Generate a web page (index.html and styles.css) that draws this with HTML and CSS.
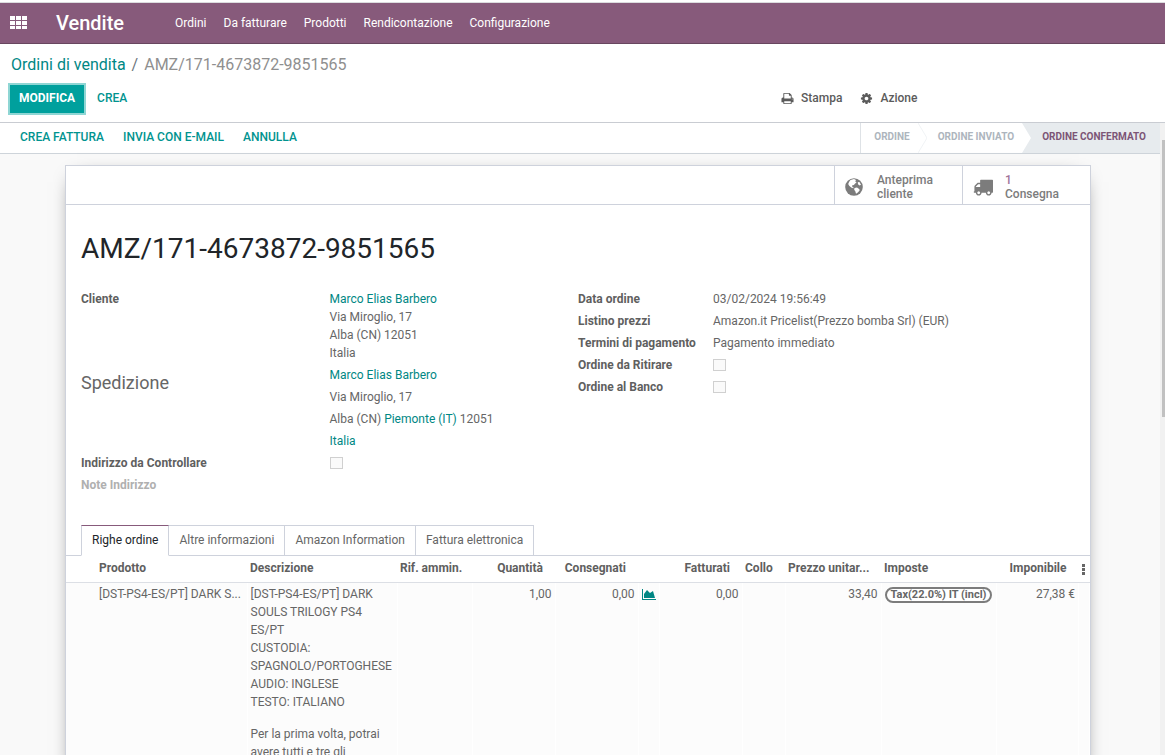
FILE: index.html
```html
<!DOCTYPE html>
<html lang="it">
<head>
<meta charset="utf-8">
<title>AMZ/171-4673872-9851565 - Vendite</title>
<link rel="stylesheet" href="styles.css">
</head>
<body>
<header class="navbar">
  <button class="apps" type="button" aria-label="Applicazioni">
    <svg width="17" height="14" viewBox="0 0 17 14" fill="currentColor"><path d="M0 0h5v4H0zM6 0h5v4H6zM12 0h5v4h-5zM0 5h5v4H0zM6 5h5v4H6zM12 5h5v4h-5zM0 10h5v3H0zM6 10h5v3H6zM12 10h5v3h-5z"/></svg>
  </button>
  <a class="brand" href="#">Vendite</a>
  <nav class="menu">
    <a href="#">Ordini</a>
    <a href="#">Da fatturare</a>
    <a href="#">Prodotti</a>
    <a href="#">Rendicontazione</a>
    <a href="#">Configurazione</a>
  </nav>
</header>

<section class="control-panel">
  <nav class="breadcrumb">
    <a href="#">Ordini di vendita</a><span class="slash">/</span><span class="current">AMZ/171-4673872-9851565</span>
  </nav>
  <div class="cp-bottom">
    <div class="cp-buttons">
      <button class="btn-primary" type="button">MODIFICA</button>
      <button class="btn-link" type="button">CREA</button>
    </div>
    <div class="cp-actions">
      <button class="btn-action" type="button">
        <svg width="13" height="13" viewBox="0 0 1792 1792" fill="currentColor"><path d="M448 1536h896v-256h-896v256zm0-640h896v-384h-160q-40 0-68-28t-28-68v-160h-640v640zm1152 64q0-26-19-45t-45-19-45 19-19 45 19 45 45 19 45-19 19-45zm128 0v416q0 13-9.5 22.5t-22.5 9.5h-224v160q0 40-28 68t-68 28h-960q-40 0-68-28t-28-68v-160h-224q-13 0-22.5-9.5t-9.5-22.5v-416q0-79 56.5-135.5t135.5-56.5h64v-544q0-40 28-68t68-28h672q40 0 88 20t76 48l152 152q28 28 48 76t20 88v256h64q79 0 135.5 56.5t56.5 135.5z"/></svg>
        Stampa
      </button>
      <button class="btn-action" type="button">
        <svg width="13" height="13" viewBox="0 0 1792 1792" fill="currentColor"><path d="M1152 896q0-106-75-181t-181-75-181 75-75 181 75 181 181 75 181-75 75-181zm512-109v222q0 12-8 23t-20 13l-185 28q-19 54-39 91 35 50 107 138 10 12 10 25t-9 23q-27 37-99 108t-94 71q-12 0-26-9l-138-108q-44 23-91 38-16 136-29 186-7 28-36 28h-222q-14 0-24.5-8.5t-11.5-21.5l-28-184q-49-16-90-37l-141 107q-10 9-25 9-14 0-25-11-126-114-165-168-7-10-7-23 0-12 8-23 15-21 51-66.5t54-70.5q-27-50-41-99l-183-27q-13-2-21-12.5t-8-23.5v-222q0-12 8-23t19-13l186-28q14-46 39-92-40-57-107-138-10-12-10-24 0-10 9-23 26-36 98.5-107.5t94.5-71.5q13 0 26 10l138 107q44-23 91-38 16-136 29-186 7-28 36-28h222q14 0 24.5 8.5t11.5 21.5l28 184q49 16 90 37l142-107q9-9 24-9 13 0 25 10 129 119 165 170 7 8 7 22 0 12-8 23-15 21-51 66.5t-54 70.5q26 50 41 98l183 28q13 2 21 12.5t8 23.5z"/></svg>
        Azione
      </button>
    </div>
  </div>
</section>

<div class="scroller">
  <main class="content">
    <div class="statusbar">
      <div class="status-buttons">
        <button class="btn-link" type="button">CREA FATTURA</button>
        <button class="btn-link" type="button">INVIA CON E-MAIL</button>
        <button class="btn-link" type="button">ANNULLA</button>
      </div>
      <div class="steps">
        <span class="step step-first">ORDINE</span>
        <svg class="chevron" width="9" height="30" viewBox="0 0 9 30"><path d="M0 0l9 15-9 15" fill="none" stroke="#f1f3f5"/></svg>
        <span class="step">ORDINE INVIATO</span>
        <svg class="chevron" width="9" height="30" viewBox="0 0 9 30"><path d="M0 0h9v30H0l9-15z" fill="#e7ebee"/></svg>
        <span class="step step-active">ORDINE CONFERMATO</span>
      </div>
    </div>

    <article class="sheet">
      <div class="button-box">
        <button class="stat" type="button">
          <svg width="18" height="18" viewBox="0 0 18 18"><circle cx="9" cy="9" r="8.800" fill="#7c7c7c"/><path d="M5.500 2l3.500-.9 2 .9-.8 1.400 1.400.8-1.400 1.200-1.400 1.600-1.800.6.400 1.400 1.400.8-.6.400-2-.8-2-1.600-1-1.800 1-2.200zM9.500 10l2.500-.6 2.400 1.800.2 1.400-1.800 2-1.800 1.200-.6-2.400-1.200-1.600zM12.800 4.200l1.600-.2 1.600 2.800-1.400.6-1.600-1.200z" fill="#fff"/></svg>
          <span>Anteprima cliente</span>
        </button>
        <button class="stat" type="button">
          <svg width="20" height="20" viewBox="0 0 1792 1792" fill="#7c7c7c"><path d="M640 1408q0-52-38-90t-90-38-90 38-38 90 38 90 90 38 90-38 38-90zm-384-512h384v-256h-158q-13 0-22 9l-195 195q-9 9-9 22v30zm1280 512q0-52-38-90t-90-38-90 38-38 90 38 90 90 38 90-38 38-90zm256-1088v1024q0 15-4 26.500t-13.500 18.500-16.500 11.500-23.500 6-22.500 2-25.500 0-22.500-.5q0 106-75 181t-181 75-181-75-75-181h-384q0 106-75 181t-181 75-181-75-75-181h-64q-3 0-22.500.5t-25.500 0-22.500-2-23.500-6-16.500-11.500-13.500-18.500-4-26.500q0-26 19-45t45-19v-320q0-8-.5-35t0-38 2.500-34.500 6.500-37 14-30.500 22.500-30l198-198q19-19 50.500-32t58.500-13h160v-192q0-26 19-45t45-19h1024q26 0 45 19t19 45z"/></svg>
          <span><b class="stat-value">1</b>Consegna</span>
        </button>
      </div>

      <div class="sheet-body">
        <h1 class="title">AMZ/171-4673872-9851565</h1>
        <div class="groups">
          <div class="group group-left">
            <span class="label">Cliente</span>
            <div class="value"><a href="#">Marco Elias Barbero</a><br>Via Miroglio, 17<br>Alba (CN) 12051<br>Italia</div>
            <span class="label-large">Spedizione</span>
            <div class="value-spaced"><a href="#">Marco Elias Barbero</a><br>Via Miroglio, 17<br>Alba (CN) <a href="#">Piemonte (IT)</a> 12051<br><a href="#">Italia</a></div>
            <label class="label" for="addr-check">Indirizzo da Controllare</label>
            <div class="value value-check"><input class="check" id="addr-check" type="checkbox" disabled></div>
            <span class="label label-empty">Note Indirizzo</span>
            <div class="value"></div>
          </div>
          <div class="group group-right">
            <span class="label">Data ordine</span>
            <div class="value">03/02/2024 19:56:49</div>
            <span class="label">Listino prezzi</span>
            <div class="value">Amazon.it Pricelist(Prezzo bomba Srl) (EUR)</div>
            <span class="label">Termini di pagamento</span>
            <div class="value">Pagamento immediato</div>
            <label class="label" for="pickup">Ordine da Ritirare</label>
            <div class="value value-check"><input class="check" id="pickup" type="checkbox" disabled></div>
            <label class="label" for="counter">Ordine al Banco</label>
            <div class="value value-check"><input class="check" id="counter" type="checkbox" disabled></div>
          </div>
        </div>
      </div>

      <nav class="tabs">
        <a class="tab tab-active" href="#">Righe ordine</a>
        <a class="tab" href="#">Altre informazioni</a>
        <a class="tab" href="#">Amazon Information</a>
        <a class="tab" href="#">Fattura elettronica</a>
      </nav>

      <table class="lines">
        <colgroup>
          <col class="c-product"><col class="c-desc"><col class="c-ref"><col class="c-qty"><col class="c-qty"><col class="c-chart"><col class="c-qty"><col class="c-pack"><col class="c-price"><col><col class="c-total"><col class="c-more">
        </colgroup>
        <thead>
          <tr>
            <th>Prodotto</th><th>Descrizione</th><th>Rif. ammin.</th><th class="num">Quantità</th><th class="num">Consegnati</th><th></th><th class="num">Fatturati</th><th>Collo</th><th>Prezzo unitar...</th><th>Imposte</th><th class="num">Imponibile</th>
            <th class="more"><svg width="3" height="11" viewBox="0 0 3 11" fill="#666"><path d="M0 0h3v3H0zM0 4h3v3H0zM0 8h3v3H0z"/></svg></th>
          </tr>
        </thead>
        <tbody>
          <tr>
            <td class="product">[DST-PS4-ES/PT] DARK S...</td>
            <td class="desc"><p>[DST-PS4-ES/PT] DARK SOULS TRILOGY PS4 ES/PT<br>CUSTODIA: SPAGNOLO/PORTOGHESE<br>AUDIO: INGLESE<br>TESTO: ITALIANO</p><p>Per la prima volta, potrai avere tutti e tre gli</p></td>
            <td></td>
            <td class="num">1,00</td>
            <td class="num">0,00</td>
            <td class="chart"><svg width="14" height="11" viewBox="0 0 14 11" fill="#008784"><path d="M0 0h1v10h13v1H0z"/><path d="M2 9V5l3-4 3 3 3-2 2 7z"/></svg></td>
            <td class="num">0,00</td>
            <td></td>
            <td class="num">33,40</td>
            <td><span class="tag">Tax(22.0%) IT (incl)</span></td>
            <td class="num">27,38 €</td>
            <td></td>
          </tr>
        </tbody>
      </table>
    </article>
  </main>
  <div class="track"><div class="thumb"></div></div>
</div>
</body>
</html>
```

FILE: styles.css
```css
* { box-sizing: border-box; }
body {
  margin: 0;
  height: 100vh;
  display: flex;
  flex-direction: column;
  overflow: hidden;
  background: #fff;
  color: #666;
  font: 12px/18px Roboto, "Liberation Sans", sans-serif;
}
a { color: #008784; text-decoration: none; }
button { font: inherit; border: 0; padding: 0; background: none; cursor: pointer; }
svg { display: block; flex: none; }

.navbar {
  flex: none;
  display: flex;
  align-items: center;
  height: 42px;
  margin-top: 2px;
  padding-left: 10px;
  background: #875a7b;
  border-top: 1px solid #dcdcdf;
  border-bottom: 1px solid #68465f;
}
.apps { color: #fff; }
.brand { margin-left: 29px; color: #fff; font-size: 20px; font-weight: 500; line-height: 24px; }
.menu { display: flex; gap: 17px; margin-left: 51px; }
.menu a { color: #fff; }

.control-panel { flex: none; padding: 10px 8px 7px; border-bottom: 1px solid #c9ccd2; }
.breadcrumb { padding-left: 3px; font-size: 16px; line-height: 21px; }
.slash { margin: 0 6px; color: #6c757d; }
.current { color: #8f8f8f; }
.cp-bottom { display: grid; grid-template-columns: 2fr 1fr; align-items: center; margin-top: 8px; }
.cp-buttons { display: flex; align-items: center; gap: 11px; }
.btn-primary {
  padding: 4px 9px 6px;
  border: 2px solid #8fd6d4;
  background: #00a09d;
  color: #fff;
  font-weight: 700;
}
.btn-link { padding-bottom: 2px; color: #00938f; font-weight: 500; }
.cp-actions { display: flex; gap: 18px; padding: 0 0 2px 7px; }
.btn-action { display: flex; align-items: center; gap: 7px; color: #5b5b5b; font-weight: 500; }

.scroller { flex: 1; min-height: 0; display: flex; }
.content { flex: 1; min-width: 0; overflow: hidden; background: #f9f9f9; }
.track { flex: none; width: 5px; padding: 17px 0 0 2px; background: #f1f1f1; }
.thumb { height: 45%; background: #c1c1c1; }

.statusbar {
  display: flex;
  justify-content: space-between;
  height: 31px;
  padding-left: 20px;
  background: #fff;
  border-bottom: 1px solid #ced4da;
}
.status-buttons { display: flex; align-items: center; gap: 19px; }
.steps { display: flex; border-left: 1px solid #dee2e6; font-size: 10px; font-weight: 700; line-height: 28px; color: #adb5bd; }
.step { padding: 0 8px 0 11px; }
.step-first { padding-left: 13px; }
.step-active { padding-right: 14px; background: #e7ebee; color: #7c5576; }

.sheet {
  margin: 11px 69px 0 65px;
  border: 1px solid #ced2dc;
  background: #fff;
  box-shadow: 0 5px 20px -12px #000;
}
.button-box { display: flex; justify-content: flex-end; height: 39px; border-bottom: 1px solid #ced2dc; }
.stat {
  display: grid;
  grid-template-columns: 20px 1fr;
  align-items: center;
  column-gap: 12px;
  width: 128px;
  padding: 3px 16px 0 10px;
  border-left: 1px solid #ced2dc;
  color: #7c7c7c;
  font-weight: 500;
  line-height: 14px;
  text-align: left;
}
.stat-value { display: block; color: #a2749a; font-weight: 500; }

.sheet-body { padding: 27px 15px 29px; }
.title { margin: 0; color: #212529; font-size: 28px; font-weight: 400; line-height: 34px; }
.groups { display: grid; grid-template-columns: 1fr 1fr; margin-top: 22px; }
.group { display: grid; align-content: start; }
.group-left { grid-template-columns: 1fr 1fr; }
.group-right { grid-template-columns: 135px 1fr; }
.label { padding: 2px 0; color: #5f5f5f; font-weight: 700; }
.label-empty { color: #b0b0b0; }
.label-large { padding: 7px 0; font-size: 18px; line-height: 24px; }
.value { padding: 2px 0; }
.value-spaced { line-height: 22px; }
.value-check { display: flex; align-items: center; }
.check { appearance: none; width: 13px; height: 12px; margin: 0; border: 1px solid #d0d0d0; background: #fafafa; }

.tabs { display: flex; padding-left: 15px; border-bottom: 1px solid #ced2dc; }
.tab {
  margin-bottom: -1px;
  padding: 5px 10px 6px;
  border: 1px solid #ced2dc;
  border-left-width: 0;
  color: #666;
}
.tab-active { border-left-width: 1px; border-top-color: #875a7b; border-bottom-color: #fff; color: #212529; }

.lines { width: 100%; table-layout: fixed; border-collapse: collapse; }
.lines th { padding: 3px 3px 5px; color: #5f5f5f; font-weight: 700; text-align: left; white-space: nowrap; border-bottom: 1px solid #dcdfe5; }
.lines td { padding: 2px 3px; vertical-align: top; background: #fcfcfc; border-right: 1px solid #fff; }
.lines th:first-child, .lines td:first-child { padding-left: 33px; }
.lines .num { text-align: right; }
.lines th.num { padding-right: 12px; }
.lines th.more, .lines td.chart { padding-top: 6px; }
.product { white-space: nowrap; }
.desc p { margin: 0 0 14px; }
.c-product { width: 181px; }
.c-desc { width: 150px; }
.c-ref { width: 75px; }
.c-qty { width: 83px; }
.c-chart { width: 21px; }
.c-pack { width: 43px; }
.c-price { width: 96px; }
.c-total { width: 82px; }
.c-more { width: 11px; }
.tag {
  display: inline-block;
  padding: 0 4px;
  border: 2px solid #7c7c7c;
  border-radius: 8px;
  background: #fff;
  font-size: 11px;
  font-weight: 700;
  line-height: 12px;
  white-space: nowrap;
}
```
